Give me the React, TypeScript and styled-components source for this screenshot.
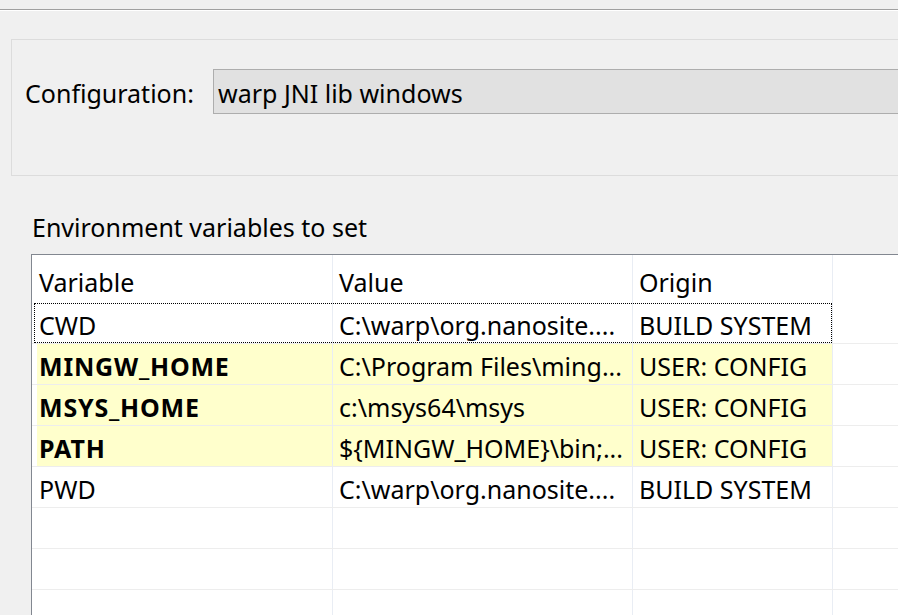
import React from "react";
import styled, { createGlobalStyle } from "styled-components";

const Global = createGlobalStyle`
  html, body { margin: 0; padding: 0; background: #f0f0f0; }
  body { font-family: "Noto Sans", "Open Sans", sans-serif; color: #000; }
`;

const Page = styled.div`
  width: 898px;
  height: 615px;
  overflow: hidden;
  background: #f0f0f0;
  padding-top: 9px;
  box-sizing: border-box;
`;

const TopRule = styled.div`
  height: 1px;
  background: #a0a0a0;
  border-bottom: 1px solid #ffffff;
`;

const GroupBox = styled.div`
  margin: 28px -20px 0 11px;
  height: 137px;
  box-sizing: border-box;
  border: 1px solid #dcdcdc;
  display: flex;
  align-items: flex-start;
  padding: 29px 0 0 13px;
`;

const FieldLabel = styled.div`
  font-size: 25px;
  line-height: 49px;
  width: 188px;
  white-space: nowrap;
`;

const Combo = styled.div`
  flex: 1;
  height: 45px;
  box-sizing: border-box;
  background: #e1e1e1;
  border: 1px solid #adadad;
  font-size: 25px;
  line-height: 47px;
  padding-left: 4px;
  white-space: nowrap;
`;

const SectionLabel = styled.div`
  margin: 36px 0 0 32px;
  font-size: 25px;
  line-height: 30px;
  height: 42px;
`;

const Table = styled.div`
  margin-left: 31px;
  margin-right: -20px;
  border: 1px solid #828790;
  background: #ffffff;
  height: 400px;
`;

const Row = styled.div<{ $header?: boolean; $focused?: boolean }>`
  position: relative;
  display: grid;
  grid-template-columns: 301px 300px 200px 1fr;
  height: ${(p) => (p.$header ? "48px" : "41px")};
  box-sizing: border-box;
  border-bottom: ${(p) => (p.$header ? "none" : "1px solid #ededed")};
  ${(p) =>
    p.$focused &&
    `
    &::after {
      content: "";
      position: absolute;
      left: 2px;
      top: 0;
      width: 798px;
      height: 40px;
      box-sizing: border-box;
      border: 1px dotted #000;
      pointer-events: none;
    }
  `}
`;

const Cell = styled.div<{ $header?: boolean; $bold?: boolean; $hl?: boolean; $first?: boolean; $last?: boolean }>`
  box-sizing: border-box;
  border-right: ${(p) => (p.$last ? "none" : "1px solid #e9edf4")};
  background: ${(p) => (p.$hl ? "#ffffcc" : "transparent")};
  ${(p) => p.$first && p.$hl && "box-shadow: inset 5px 0 0 #ffffff;"}
  font-size: 25px;
  font-weight: ${(p) => (p.$bold ? 700 : 400)};
  letter-spacing: ${(p) => (p.$bold ? "0.8px" : "0")};
  line-height: ${(p) => (p.$header ? "54px" : "44px")};
  padding-left: ${(p) => (p.$first ? "7px" : "6px")};
  white-space: nowrap;
  overflow: hidden;
`;

type Env = { name: string; value: string; origin: string; user: boolean };

const rows: Env[] = [
  { name: "CWD", value: "C:\\warp\\org.nanosite....", origin: "BUILD SYSTEM", user: false },
  { name: "MINGW_HOME", value: "C:\\Program Files\\ming...", origin: "USER: CONFIG", user: true },
  { name: "MSYS_HOME", value: "c:\\msys64\\msys", origin: "USER: CONFIG", user: true },
  { name: "PATH", value: "${MINGW_HOME}\\bin;...", origin: "USER: CONFIG", user: true },
  { name: "PWD", value: "C:\\warp\\org.nanosite....", origin: "BUILD SYSTEM", user: false },
];

export default function App() {
  return (
    <>
      <Global />
      <Page>
        <TopRule />
        <GroupBox>
          <FieldLabel>Configuration:</FieldLabel>
          <Combo>warp JNI lib windows</Combo>
        </GroupBox>
        <SectionLabel>Environment variables to set</SectionLabel>
        <Table>
          <Row $header>
            <Cell $header $first>Variable</Cell>
            <Cell $header>Value</Cell>
            <Cell $header>Origin</Cell>
            <Cell $header $last />
          </Row>
          {rows.map((r, i) => (
            <Row key={r.name} $focused={i === 0}>
              <Cell $first $bold={r.user} $hl={r.user}>{r.name}</Cell>
              <Cell $hl={r.user}>{r.value}</Cell>
              <Cell $hl={r.user}>{r.origin}</Cell>
              <Cell $last />
            </Row>
          ))}
          {[0, 1, 2].map((i) => (
            <Row key={"e" + i}>
              <Cell $first />
              <Cell />
              <Cell />
              <Cell $last />
            </Row>
          ))}
        </Table>
      </Page>
    </>
  );
}
